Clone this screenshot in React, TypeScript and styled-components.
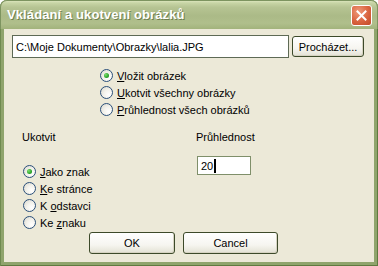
import React from "react";
import styled, { createGlobalStyle } from "styled-components";

const Global = createGlobalStyle`
  html, body {
    margin: 0;
    padding: 0;
    background: #ffffff;
  }
  * {
    box-sizing: border-box;
  }
`;

const font = `"Liberation Sans", "DejaVu Sans", sans-serif`;

function App() {
  return (
    <>
      <Global />
      <Window>
        <TitleBar>
          <Title>Vkládaní a ukotvení obrázků</Title>
          <CloseButton aria-label="Zavřít">
            <svg width="11" height="11" viewBox="0 0 11 11">
              <path
                d="M1.5 1.5 L9.5 9.5 M9.5 1.5 L1.5 9.5"
                stroke="#ffffff"
                strokeWidth="2"
                strokeLinecap="square"
              />
            </svg>
          </CloseButton>
        </TitleBar>

        <Client>
          <PathRow>
            <TextField>C:\Moje Dokumenty\Obrazky\lalia.JPG</TextField>
            <Button $w={72} $h={21}>
              Procházet...
            </Button>
          </PathRow>

          <ModeGroup>
            <Radio checked label="Vložit obrázek" accessKey={0} />
            <Radio label="Ukotvit všechny obrázky" accessKey={0} />
            <Radio label="Průhlednost všech obrázků" accessKey={0} />
          </ModeGroup>

          <Columns>
            <Column $w={174}>
              <GroupLabel>Ukotvit</GroupLabel>
              <AnchorList>
                <Radio checked label="Jako znak" accessKey={0} />
                <Radio label="Ke stránce" accessKey={0} />
                <Radio label="K odstavci" accessKey={2} />
                <Radio label="Ke znaku" accessKey={3} />
              </AnchorList>
            </Column>
            <Column $w={120}>
              <GroupLabel>Průhlednost</GroupLabel>
              <NumberField>
                20<Caret />
              </NumberField>
            </Column>
          </Columns>

          <ButtonRow>
            <Button $w={86} $h={22}>
              OK
            </Button>
            <Button $w={95} $h={22}>
              Cancel
            </Button>
          </ButtonRow>
        </Client>
      </Window>
    </>
  );
}

function Radio({
  label,
  checked,
  accessKey,
}: {
  label: string;
  checked?: boolean;
  accessKey: number;
}) {
  const before = label.slice(0, accessKey);
  const key = label.slice(accessKey, accessKey + 1);
  const after = label.slice(accessKey + 1);
  return (
    <RadioRow>
      <RadioCircle>{checked && <RadioDot />}</RadioCircle>
      <span>
        {before}
        <u>{key}</u>
        {after}
      </span>
    </RadioRow>
  );
}

const Window = styled.div`
  width: 378px;
  height: 266px;
  display: flex;
  flex-direction: column;
  background: #8fa46c;
  border-radius: 8px 8px 0 0;
  box-shadow: inset 1px 0 0 #6f8a4f, inset -1px 0 0 #5f7a40, inset 0 -1px 0 #5f7a40;
  padding: 0 4px 4px;
  font-family: ${font};
  font-size: 11px;
  color: #000;
`;

const TitleBar = styled.div`
  height: 29px;
  margin: 0 -4px;
  display: flex;
  align-items: center;
  justify-content: space-between;
  padding: 0 6px 0 7px;
  border-radius: 7px 7px 0 0;
  background: linear-gradient(
    to bottom,
    #e4ecc6 0%,
    #c8d5a6 10%,
    #b6c493 25%,
    #abba87 55%,
    #b0bf8c 80%,
    #a2b37c 100%
  );
  box-shadow: inset 1px 0 0 #7d9460, inset -1px 0 0 #7d9460, inset 0 1px 0 #7d9460;
`;

const Title = styled.span`
  font-family: ${font};
  font-weight: bold;
  font-size: 13px;
  color: #ffffff;
  text-shadow: 1px 1px 0 #6f7f4f;
  letter-spacing: 0.1px;
`;

const CloseButton = styled.div`
  width: 21px;
  height: 21px;
  margin-top: 2px;
  display: flex;
  align-items: center;
  justify-content: center;
  border: 1px solid #ffffff;
  border-radius: 3px;
  background: radial-gradient(circle at 35% 30%, #ef9a7a 0%, #d9643f 55%, #c24a28 100%);
`;

const Client = styled.div`
  flex: 1;
  display: flex;
  flex-direction: column;
  background: #ece9d8;
  padding: 6px 10px 0 8px;
`;

const PathRow = styled.div`
  display: flex;
  align-items: center;
  gap: 3px;
`;

const TextField = styled.div`
  width: 277px;
  height: 23px;
  display: flex;
  align-items: center;
  padding-left: 3px;
  background: #ffffff;
  border: 1px solid #5e6a55;
  white-space: nowrap;
  overflow: hidden;
`;

const Button = styled.div<{ $w: number; $h: number }>`
  width: ${(p) => p.$w}px;
  height: ${(p) => p.$h}px;
  display: flex;
  align-items: center;
  justify-content: center;
  border: 1px solid #3d4a2a;
  border-radius: 3px;
  background: linear-gradient(to bottom, #ffffff 0%, #f6f5f0 60%, #e3e1d4 100%);
  box-shadow: inset -1px -1px 0 #d6d3c2;
`;

const ModeGroup = styled.div`
  margin: 9px 0 0 88px;
  display: flex;
  flex-direction: column;
`;

const RadioRow = styled.div`
  height: 17px;
  display: flex;
  align-items: center;
  gap: 4px;
  white-space: nowrap;
`;

const RadioCircle = styled.div`
  width: 13px;
  height: 13px;
  flex: none;
  display: flex;
  align-items: center;
  justify-content: center;
  border-radius: 50%;
  border: 1px solid #2a4f7a;
  background: radial-gradient(circle at 70% 70%, #ffffff 0%, #f3f2ec 45%, #d8d6cb 100%);
`;

const RadioDot = styled.div`
  width: 5px;
  height: 5px;
  border-radius: 50%;
  background: radial-gradient(circle at 35% 35%, #7ede6e 0%, #2aa52a 60%, #1b7f1b 100%);
`;

const Columns = styled.div`
  display: flex;
  margin: 13px 0 0 10px;
`;

const Column = styled.div<{ $w: number }>`
  width: ${(p) => p.$w}px;
  display: flex;
  flex-direction: column;
`;

const GroupLabel = styled.div`
  height: 13px;
  line-height: 13px;
`;

const AnchorList = styled.div`
  margin-top: 19px;
  margin-left: 1px;
  display: flex;
  flex-direction: column;
`;

const NumberField = styled.div`
  margin: 12px 0 0 1px;
  width: 54px;
  height: 19px;
  display: flex;
  align-items: center;
  padding-left: 3px;
  background: #ffffff;
  border: 1px solid #7f8f6a;
`;

const Caret = styled.span`
  display: inline-block;
  width: 2px;
  height: 14px;
  margin-left: 1px;
  background: #000;
`;

const ButtonRow = styled.div`
  margin: 1px 0 0 77px;
  display: flex;
  gap: 8px;
`;

export default App;
